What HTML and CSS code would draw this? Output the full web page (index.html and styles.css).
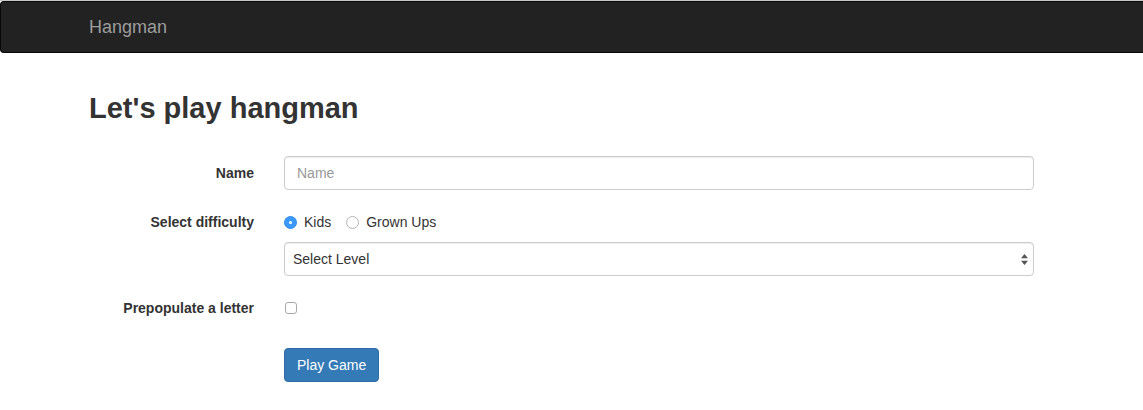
FILE: index.html
```html
<!DOCTYPE html>
<html>
<head>
<meta charset="utf-8">
<title>Hangman</title>
<link rel="stylesheet" href="styles.css">
</head>
<body>
<nav class="navbar">
  <a class="brand" href="#">Hangman</a>
</nav>
<main class="main">
  <h2 class="title">Let's play hangman</h2>
  <form class="form">
    <div class="row">
      <label class="label" for="name">Name</label>
      <div class="control">
        <input class="input" id="name" type="text" placeholder="Name">
      </div>
    </div>
    <div class="row">
      <label class="label">Select difficulty</label>
      <div class="control">
        <div class="radios">
          <label class="radio"><span class="dot checked"></span>Kids</label>
          <label class="radio"><span class="dot"></span>Grown Ups</label>
        </div>
        <div class="select">
          <span>Select Level</span>
          <svg class="arrows" width="7" height="11" viewBox="0 0 7 11"><path d="M3.5 0 L7 4.2 L0 4.2 Z M3.5 11 L7 6.8 L0 6.8 Z" fill="#555"/></svg>
        </div>
      </div>
    </div>
    <div class="row row-check">
      <label class="label">Prepopulate a letter</label>
      <div class="control">
        <span class="check"></span>
      </div>
    </div>
    <div class="row row-btn">
      <div class="label"></div>
      <div class="control">
        <button class="btn" type="button">Play Game</button>
      </div>
    </div>
  </form>
</main>
</body>
</html>
```
FILE: styles.css
```css
html, body {
  margin: 0;
  padding: 0;
  background: #fff;
}
body {
  border-top: 1px solid #c8c8c8;
  font-family: "Liberation Sans", Arial, sans-serif;
  font-size: 14px;
  line-height: 20px;
  color: #333;
  overflow: hidden;
}
.navbar {
  height: 50px;
  background: #222;
  border: 1px solid #080808;
  border-right: none;
  border-radius: 4px 0 0 4px;
  display: flex;
  align-items: center;
}
.brand {
  margin-left: 88px;
  font-size: 18px;
  line-height: 20px;
  color: #9d9d9d;
  text-decoration: none;
}
.main {
  padding-left: 89px;
}
.title {
  margin: 39px 0 31px;
  font-size: 29px;
  line-height: 33px;
  font-weight: 700;
  color: #333;
}
.row {
  display: flex;
  margin-bottom: 15px;
}
.label {
  width: 165px;
  margin-right: 30px;
  padding-top: 7px;
  text-align: right;
  font-weight: 700;
  line-height: 20px;
}
.control {
  width: 750px;
}
.input {
  box-sizing: border-box;
  width: 750px;
  height: 34px;
  padding: 6px 12px;
  border: 1px solid #ccc;
  border-radius: 4px;
  font: inherit;
  color: #555;
  box-shadow: inset 0 1px 1px rgba(0,0,0,.075);
  display: block;
}
.input::placeholder {
  color: #999;
}
.radios {
  display: flex;
  padding-top: 7px;
  height: 20px;
  margin-bottom: 10px;
}
.radio {
  display: flex;
  align-items: center;
  margin-right: 15px;
}
.dot {
  box-sizing: border-box;
  width: 13px;
  height: 13px;
  border-radius: 50%;
  border: 1px solid #b5b5b5;
  background: #fff;
  margin-right: 7px;
  position: relative;
}
.dot.checked {
  background: #3b99fc;
  border-color: #2f8ae8;
}
.dot.checked::after {
  content: "";
  position: absolute;
  left: 4px;
  top: 4px;
  width: 3px;
  height: 3px;
  border-radius: 50%;
  background: #fff;
}
.select {
  box-sizing: border-box;
  width: 750px;
  height: 34px;
  border: 1px solid #ccc;
  border-radius: 4px;
  display: flex;
  align-items: center;
  justify-content: space-between;
  padding: 0 5px 0 8px;
  color: #333;
  box-shadow: inset 0 1px 1px rgba(0,0,0,.075);
}
.row-check {
  margin-bottom: 30px;
}
.check {
  display: block;
  box-sizing: border-box;
  width: 12px;
  height: 12px;
  margin: 11px 0 0 1px;
  border: 1px solid #a9a9a9;
  border-radius: 3px;
  background: #fff;
}
.row-check .control {
  height: 27px;
}
.btn {
  height: 34px;
  padding: 6px 12px;
  font: inherit;
  font-size: 14px;
  color: #fff;
  background: #337ab7;
  border: 1px solid #2e6da4;
  border-radius: 4px;
  cursor: pointer;
}
```
